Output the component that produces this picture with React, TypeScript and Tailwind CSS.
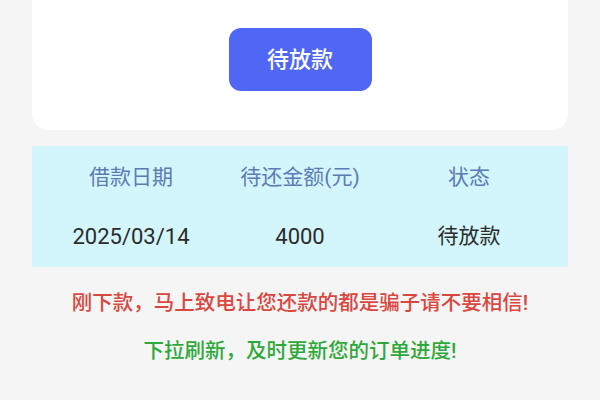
import React from "react";

export default function App() {
  const font = { fontFamily: 'Roboto, "Noto Sans CJK SC", "Noto Sans", sans-serif' };
  return (
    <div className="w-[600px] h-[400px] bg-[#f5f5f6] overflow-hidden" style={font}>
      <div className="mx-[32px] h-[130px] bg-white rounded-b-[16px] flex justify-center pt-[28px]">
        <div className="w-[143px] h-[63px] rounded-[12px] bg-[#5066f5] flex items-center justify-center text-white text-[22px] font-medium">
          待放款
        </div>
      </div>
      <div className="mx-[32px] mt-[16px] h-[121px] bg-[#d3f6fd] grid grid-cols-[198px_140px_198px] grid-rows-2 text-[21px]">
        <div className="flex items-center justify-center pt-[2px] text-[#5c7bb5]">借款日期</div>
        <div className="flex items-center justify-center pt-[2px] text-[#5c7bb5]">待还金额(元)</div>
        <div className="flex items-center justify-center pt-[2px] text-[#5c7bb5]">状态</div>
        <div className="flex items-center justify-center text-[22px] text-[#2b2b2b]">2025/03/14</div>
        <div className="flex items-center justify-center text-[22px] text-[#2b2b2b]">4000</div>
        <div className="flex items-center justify-center text-[#2b2b2b]">待放款</div>
      </div>
      <div className="mt-[21px] text-center text-[20.5px] leading-[30px] font-medium text-[#d9473f]">
        刚下款，马上致电让您还款的都是骗子请不要相信!
      </div>
      <div className="mt-[18px] text-center text-[20.5px] leading-[30px] font-medium text-[#2fa83a]">
        下拉刷新，及时更新您的订单进度!
      </div>
    </div>
  );
}
